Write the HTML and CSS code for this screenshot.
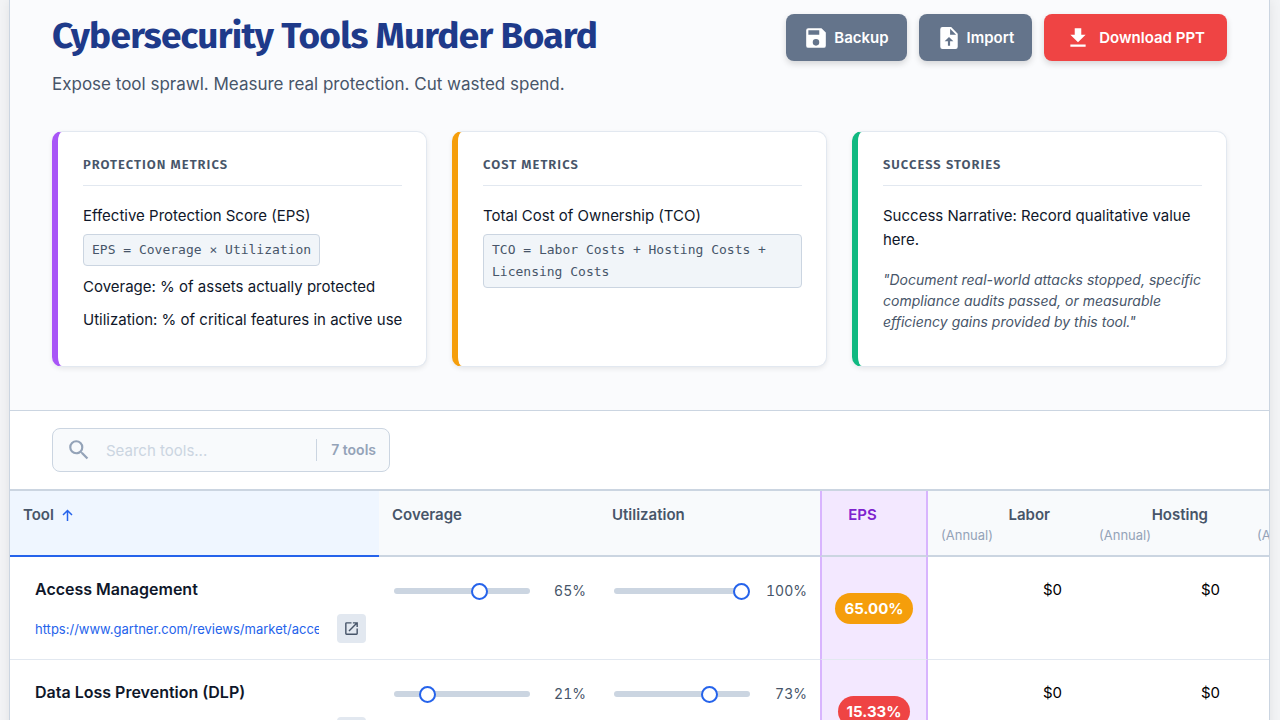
FILE: index.html
```html
<!DOCTYPE html>
<html lang="en">
<head>
<meta charset="UTF-8">
<meta name="viewport" content="width=device-width, initial-scale=1.0">
<title>Cybersecurity Tools Murder Board</title>
<link rel="stylesheet" href="styles.css">
</head>
<body>

  <div class="container">
    <header class="header">
      <div class="header-top">
        <div>
          <h1>Cybersecurity Tools Murder Board</h1>
          <p class="subtitle">Expose tool sprawl. Measure real protection. Cut wasted spend.</p>
        </div>
        <div class="header-actions">
          <button type="button" class="btn">
            <svg viewBox="1 1 22 22"><path d="M17 3H5a2 2 0 0 0-2 2v14a2 2 0 0 0 2 2h14a2 2 0 0 0 2-2V7l-4-4zm-5 16a3 3 0 1 1 0-6 3 3 0 0 1 0 6zm3-10H5V5h10v4z"/></svg>
            Backup
          </button>
          <button type="button" class="btn">
            <svg viewBox="1 1 22 22"><path d="M14 2H6a2 2 0 0 0-2 2v16a2 2 0 0 0 2 2h12a2 2 0 0 0 2-2V8l-6-6zm-1 7V3.500L18.500 9H13zm0 6v4h-2v-4H8l4-4 4 4h-3z"/></svg>
            Import
          </button>
          <button type="button" class="btn btn-download">
            <svg viewBox="1 1 22 22"><path d="M19 9h-4V3H9v6H5l7 7 7-7zM5 18v2h14v-2H5z"/></svg>
            Download PPT
          </button>
        </div>
      </div>

      <div class="cards">
        <section class="card card-protection">
          <h2>Protection Metrics</h2>
          <p>Effective Protection Score (EPS)</p>
          <code>EPS = Coverage × Utilization</code>
          <p>Coverage: % of assets actually protected</p>
          <p>Utilization: % of critical features in active use</p>
        </section>
        <section class="card card-cost">
          <h2>Cost Metrics</h2>
          <p>Total Cost of Ownership (TCO)</p>
          <code>TCO = Labor Costs + Hosting Costs + Licensing Costs</code>
        </section>
        <section class="card card-success">
          <h2>Success Stories</h2>
          <p>Success Narrative: Record qualitative value here.</p>
          <p class="quote">"Document real-world attacks stopped, specific compliance audits passed, or measurable efficiency gains provided by this tool."</p>
        </section>
      </div>
    </header>

    <div class="toolbar">
      <div class="search-box">
        <svg viewBox="1 1 22 22"><path d="M15.500 14h-.79l-.28-.27A6.470 6.470 0 0 0 16 9.500 6.500 6.500 0 1 0 9.500 16c1.610 0 3.090-.59 4.230-1.570l.27.28v.79l5 4.990L20.490 19l-4.990-5zm-6 0a4.500 4.500 0 1 1 0-9 4.500 4.500 0 0 1 0 9z"/></svg>
        <input type="text" id="search" placeholder="Search tools..." aria-label="Search tools">
        <span class="tool-count">7 tools</span>
      </div>
    </div>

    <div class="table-wrap">
      <table>
        <colgroup>
          <col class="col-tool">
          <col class="col-coverage">
          <col class="col-utilization">
          <col class="col-eps">
          <col class="col-cost">
          <col class="col-cost">
          <col class="col-cost">
        </colgroup>
        <thead>
          <tr>
            <th class="sorted">Tool <svg class="sort-icon" viewBox="0 0 15 15"><path d="M7.500 13V2.500M3 7l4.500-4.500L12 7"/></svg></th>
            <th>Coverage</th>
            <th>Utilization</th>
            <th class="eps"><span class="th-label">EPS</span></th>
            <th class="cost"><span class="th-label">Labor</span><small>(Annual)</small></th>
            <th class="cost"><span class="th-label">Hosting</span><small>(Annual)</small></th>
            <th class="cost"><small>(Annual)</small></th>
          </tr>
        </thead>
        <tbody>
          <tr>
            <td>
              <input type="text" class="tool-name" value="Access Management" aria-label="Tool name">
              <div class="link-row">
                <input type="text" class="tool-url" value="https://www.gartner.com/reviews/market/access-management" aria-label="Tool link">
                <button type="button" class="open-btn" aria-label="Open link">
                  <svg viewBox="0 0 24 24"><path d="M19 19H5V5h7V3H5a2 2 0 0 0-2 2v14a2 2 0 0 0 2 2h14a2 2 0 0 0 2-2v-7h-2v7zM14 3v2h3.590l-9.830 9.830 1.410 1.410L19 6.410V10h2V3h-7z"/></svg>
                </button>
              </div>
            </td>
            <td>
              <div class="slider-row">
                <input type="range" min="0" max="100" value="65" aria-label="Coverage">
                <span>65%</span>
              </div>
            </td>
            <td>
              <div class="slider-row">
                <input type="range" min="0" max="100" value="100" aria-label="Utilization">
                <span>100%</span>
              </div>
            </td>
            <td class="eps"><span class="badge badge-medium">65.00%</span></td>
            <td><input type="text" class="cost-input" value="$0" aria-label="Labor cost"></td>
            <td><input type="text" class="cost-input" value="$0" aria-label="Hosting cost"></td>
            <td></td>
          </tr>
          <tr>
            <td>
              <input type="text" class="tool-name" value="Data Loss Prevention (DLP)" aria-label="Tool name">
              <div class="link-row">
                <input type="text" class="tool-url" value="" aria-label="Tool link">
                <button type="button" class="open-btn" aria-label="Open link">
                  <svg viewBox="0 0 24 24"><path d="M19 19H5V5h7V3H5a2 2 0 0 0-2 2v14a2 2 0 0 0 2 2h14a2 2 0 0 0 2-2v-7h-2v7zM14 3v2h3.590l-9.830 9.830 1.410 1.410L19 6.410V10h2V3h-7z"/></svg>
                </button>
              </div>
            </td>
            <td>
              <div class="slider-row">
                <input type="range" min="0" max="100" value="21" aria-label="Coverage">
                <span>21%</span>
              </div>
            </td>
            <td>
              <div class="slider-row">
                <input type="range" min="0" max="100" value="73" aria-label="Utilization">
                <span>73%</span>
              </div>
            </td>
            <td class="eps"><span class="badge badge-low">15.33%</span></td>
            <td><input type="text" class="cost-input" value="$0" aria-label="Labor cost"></td>
            <td><input type="text" class="cost-input" value="$0" aria-label="Hosting cost"></td>
            <td></td>
          </tr>
        </tbody>
      </table>
    </div>
  </div>

</body>
</html>
```

FILE: styles.css
```css
* {
  box-sizing: border-box;
}

body {
  margin: 0;
  font-family: Inter, "Liberation Sans", sans-serif;
  font-size: 15px;
  line-height: 24px;
  color: #0f172a;
  background: #f3f4f6;
}

h1, h2, p {
  margin: 0;
}

button, input {
  font-family: inherit;
}

svg {
  fill: currentColor;
  flex-shrink: 0;
}

.container {
  margin: 0 10px 0 9px;
  border: 1px solid #cbd5e1;
  border-width: 0 1px;
  background: #fff;
  box-shadow: 0 0 12px rgba(0, 0, 0, 0.08);
}

/* Header */
.header {
  padding: 14px 42px 43px;
  background: #fafbfd;
  border-bottom: 1px solid #cbd5e1;
}

.header-top {
  display: flex;
  justify-content: space-between;
  align-items: flex-start;
  margin-bottom: 33px;
}

h1 {
  font-family: "Fira Sans", "Open Sans", sans-serif;
  font-size: 37px;
  line-height: 44px;
  font-weight: 700;
  letter-spacing: -0.02em;
  color: #1e3a8a;
}

.subtitle {
  margin-top: 13px;
  font-size: 17px;
  line-height: 27px;
  color: #475569;
}

.header-actions {
  display: flex;
  gap: 12px;
}

.btn {
  display: flex;
  align-items: center;
  gap: 6px;
  height: 47px;
  padding: 0 18px;
  border: none;
  border-radius: 8px;
  background: #64748b;
  color: #fff;
  font-size: 15px;
  font-weight: 600;
  cursor: pointer;
  box-shadow: 0 3px 6px rgba(0, 0, 0, 0.15);
}

.btn svg {
  width: 24px;
  height: 24px;
}

.btn-download {
  gap: 9px;
  padding: 0 22px;
  background: #ef4444;
}

/* Metric cards */
.cards {
  display: grid;
  grid-template-columns: repeat(3, minmax(0, 1fr));
  gap: 25px;
}

.card {
  padding: 25px 24px 25px 25px;
  border: 1px solid #e2e8f0;
  border-left: 6px solid #a855f7;
  border-radius: 10px;
  background: #fff;
  box-shadow: 0 2px 5px rgba(0, 0, 0, 0.08);
}

.card-cost {
  border-left-color: #f59e0b;
}

.card-success {
  border-left-color: #10b981;
}

.card h2 {
  margin-bottom: 18px;
  padding-bottom: 12px;
  border-bottom: 1px solid #e2e8f0;
  font-family: "Fira Sans", "Open Sans", sans-serif;
  font-size: 13px;
  line-height: 16px;
  font-weight: 600;
  letter-spacing: 1px;
  text-transform: uppercase;
  color: #475569;
}

.card p {
  margin-bottom: 9px;
}

.card-protection p {
  white-space: nowrap;
}

.card code {
  display: inline-block;
  margin: -3px 0 9px;
  padding: 4px 8px;
  border: 1px solid #cbd5e1;
  border-radius: 4px;
  background: #f1f5f9;
  font-family: "DejaVu Sans Mono", monospace;
  font-size: 13px;
  line-height: 22px;
  color: #475569;
  vertical-align: top;
}

.card .quote {
  margin-top: 17px;
  font-size: 14px;
  line-height: 21px;
  font-style: italic;
  color: #475569;
}

/* Search */
.toolbar {
  padding: 17px 42px;
}

.search-box {
  display: flex;
  align-items: center;
  width: 338px;
  height: 44px;
  padding: 0 13px 0 14px;
  border: 1px solid #cbd5e1;
  border-radius: 8px;
  background: #f8fafc;
  color: #94a3b8;
}

.search-box svg {
  width: 24px;
  height: 24px;
}

.search-box input {
  flex: 1;
  min-width: 0;
  padding: 0 15px;
  border: none;
  outline: none;
  background: none;
  font-size: 15px;
}

.search-box input::placeholder {
  color: #cbd5e1;
}

.tool-count {
  padding-left: 14px;
  border-left: 1px solid #cbd5e1;
  font-size: 14px;
  line-height: 22px;
  font-weight: 600;
}

/* Tools table */
.table-wrap {
  overflow: hidden;
  border-top: 2px solid #cbd5e1;
}

table {
  width: 1392px;
  table-layout: fixed;
  border-collapse: separate;
  border-spacing: 0;
}

.col-tool {
  width: 369px;
}

.col-coverage {
  width: 220px;
}

.col-utilization {
  width: 221px;
}

.col-eps {
  width: 108px;
}

.col-cost {
  width: 158px;
}

th {
  height: 66px;
  padding: 12px 13px;
  border-bottom: 2px solid #cbd5e1;
  background: #f8fafc;
  font-size: 15px;
  line-height: 24px;
  font-weight: 600;
  text-align: left;
  vertical-align: top;
  color: #475569;
}

th.sorted {
  background: #eff6ff;
  border-bottom-color: #2563eb;
}

.sort-icon {
  width: 15px;
  height: 15px;
  margin-left: 2px;
  fill: none;
  stroke: #2563eb;
  stroke-width: 1.5;
  vertical-align: middle;
}

.th-label {
  display: block;
  padding-right: 23px;
}

th.cost .th-label {
  text-align: right;
}

th.cost small {
  display: block;
  font-size: 13px;
  line-height: 16px;
  font-weight: 400;
  color: #94a3b8;
}

th.cost:last-child small {
  padding-top: 24px;
}

td {
  height: 103px;
  padding: 20px 13px 15px;
  border-bottom: 1px solid #e2e8f0;
  vertical-align: top;
}

.eps {
  border-left: 2px solid #d8b4fe;
  border-right: 2px solid #d8b4fe;
  background: #f3e8ff;
  text-align: center;
}

th.eps {
  color: #7e22ce;
}

td.eps {
  padding: 0;
  vertical-align: middle;
}

td input[type="text"] {
  display: block;
  width: 100%;
  border: none;
  background: none;
}

td .tool-name {
  height: 24px;
  padding: 0 12px;
  font-size: 16px;
  font-weight: 600;
  color: #0f172a;
}

.link-row {
  display: flex;
  gap: 6px;
  margin-top: 13px;
}

td .tool-url {
  flex: 1;
  min-width: 0;
  padding: 0 12px;
  font-size: 13px;
  color: #2563eb;
}

.open-btn {
  display: flex;
  align-items: center;
  justify-content: center;
  width: 29px;
  height: 29px;
  padding: 0;
  border: none;
  border-radius: 4px;
  background: #e2e8f0;
  color: #475569;
  cursor: pointer;
}

.open-btn svg {
  width: 17px;
  height: 17px;
}

.slider-row {
  display: flex;
  justify-content: space-between;
  align-items: center;
  height: 28px;
  font-size: 14px;
  color: #475569;
  font-variant-numeric: tabular-nums;
}

input[type="range"] {
  -webkit-appearance: none;
  appearance: none;
  width: 136px;
  height: 6px;
  margin: 0 2px;
  border-radius: 3px;
  background: #cbd5e1;
}

input[type="range"]::-webkit-slider-thumb {
  -webkit-appearance: none;
  width: 17px;
  height: 17px;
  border: 2px solid #2563eb;
  border-radius: 50%;
  background: #fff;
}

.badge {
  display: inline-block;
  padding: 0 9px;
  border-radius: 16px;
  font-size: 15px;
  line-height: 31px;
  font-weight: 700;
  color: #fff;
}

.badge-medium {
  background: #f59e0b;
}

.badge-low {
  background: #ef4444;
}

td .cost-input {
  height: 24px;
  padding: 0 11px;
  font-size: 15px;
  text-align: right;
  color: #000;
}
```
